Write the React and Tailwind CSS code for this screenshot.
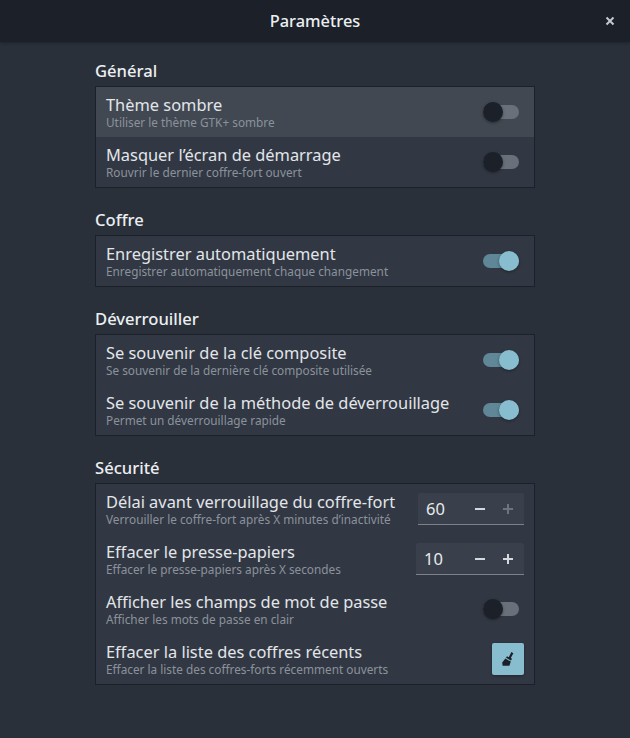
import React from "react";

const font = "font-['Noto_Sans','Open_Sans',sans-serif]";

function Toggle({ on }) {
  return (
    <div className="relative w-[36px] h-[20px] shrink-0">
      <div className={`absolute left-0 right-0 top-[3px] h-[14px] rounded-full ${on ? "bg-[#5f8797]" : "bg-[#6a707a]"}`} />
      <div className={`absolute top-0 w-[20px] h-[20px] rounded-full shadow-[0_1px_3px_rgba(0,0,0,0.4)] ${on ? "right-0 bg-[#88bdd0]" : "left-0 bg-[#1b2029]"}`} />
    </div>
  );
}

function Spin({ value, w, dim }) {
  return (
    <div className={`flex items-center h-[32px] bg-[#3a404b] border-b border-[#7d828a] rounded-t-[2px] ${w}`}>
      <span className="flex-1 pl-[8px] text-[16.5px] leading-[20px] text-[#e6eaee]">{value}</span>
      <span className="flex w-[28px] justify-center">
        <svg width="12" height="12" viewBox="0 0 12 12"><rect x="1" y="5" width="10" height="2" fill="#d5d8dc" /></svg>
      </span>
      <span className="flex w-[28px] mr-[2px] justify-center">
        <svg width="12" height="12" viewBox="0 0 12 12"><path d="M1 5h4V1h2v4h4v2H7v4H5V7H1z" fill={dim ? "#6f747c" : "#d5d8dc"} /></svg>
      </span>
    </div>
  );
}

function Row({ title, sub, hover, tight, children }) {
  return (
    <div className={`flex items-center justify-between h-[50px] pl-[10px] ${tight ? "pr-[10px]" : "pr-[15px]"} ${hover ? "bg-[#414852]" : ""}`}>
      <div className="flex flex-col">
        <span className="text-[16.4px] leading-[20px] pt-[1px] box-content text-[#e2e6ea]">{title}</span>
        <span className="text-[11.8px] leading-[15px] text-[#8b929c]">{sub}</span>
      </div>
      {children}
    </div>
  );
}

function Section({ title, children }) {
  return (
    <section className="mb-[22px]">
      <h2 className="h-[25px] text-[16.6px] leading-[20px] font-medium text-[#eceff2]">{title}</h2>
      <div className="bg-[#323843] border border-[#1c2028]">{children}</div>
    </section>
  );
}

export default function App() {
  return (
    <div className={`w-[630px] h-[738px] bg-[#2a303a] overflow-hidden ${font}`}>
      <header className="relative flex items-center justify-center h-[42px] bg-[#1c2028] shadow-[0_1px_3px_rgba(0,0,0,0.3)]">
        <h1 className="text-[16.4px] font-medium text-[#eceff2]">Paramètres</h1>
        <svg className="absolute right-[15px] top-[16px]" width="10" height="10" viewBox="0 0 10 10">
          <path d="M1.5 1.5l7 7M8.5 1.5l-7 7" stroke="#c5c9ce" strokeWidth="2" />
        </svg>
      </header>
      <main className="w-[440px] mx-auto pt-[19px]">
        <Section title="Général">
          <Row hover title="Thème sombre" sub="Utiliser le thème GTK+ sombre"><Toggle /></Row>
          <Row title="Masquer l’écran de démarrage" sub="Rouvrir le dernier coffre-fort ouvert"><Toggle /></Row>
        </Section>
        <Section title="Coffre">
          <Row title="Enregistrer automatiquement" sub="Enregistrer automatiquement chaque changement"><Toggle on /></Row>
        </Section>
        <Section title="Déverrouiller">
          <Row title="Se souvenir de la clé composite" sub="Se souvenir de la dernière clé composite utilisée"><Toggle on /></Row>
          <Row title="Se souvenir de la méthode de déverrouillage" sub="Permet un déverrouillage rapide"><Toggle on /></Row>
        </Section>
        <Section title="Sécurité">
          <Row tight title="Délai avant verrouillage du coffre-fort" sub="Verrouiller le coffre-fort après X minutes d’inactivité"><Spin value="60" w="w-[106px]" dim /></Row>
          <Row tight title="Effacer le presse-papiers" sub="Effacer le presse-papiers après X secondes"><Spin value="10" w="w-[108px]" /></Row>
          <Row title="Afficher les champs de mot de passe" sub="Afficher les mots de passe en clair"><Toggle /></Row>
          <Row tight title="Effacer la liste des coffres récents" sub="Effacer la liste des coffres-forts récemment ouverts">
            <button className="flex items-center justify-center w-[32px] h-[32px] rounded-[2px] bg-[#88bdd0] shadow-[0_1px_3px_rgba(0,0,0,0.35)]">
              <svg width="14" height="16" viewBox="0 0 14 16"><path d="M10.4 1 L12.4 2.2 L9.8 7 L11 7.8 L10 9.6 L5 6.8 L6 5.2 L7.8 6.2 Z M4.4 7.6 L9.8 10.6 L8.4 14.8 L1.6 14.8 L1.2 11.6 Z" fill="#1b2029" /></svg>
            </button>
          </Row>
        </Section>
      </main>
    </div>
  );
}
